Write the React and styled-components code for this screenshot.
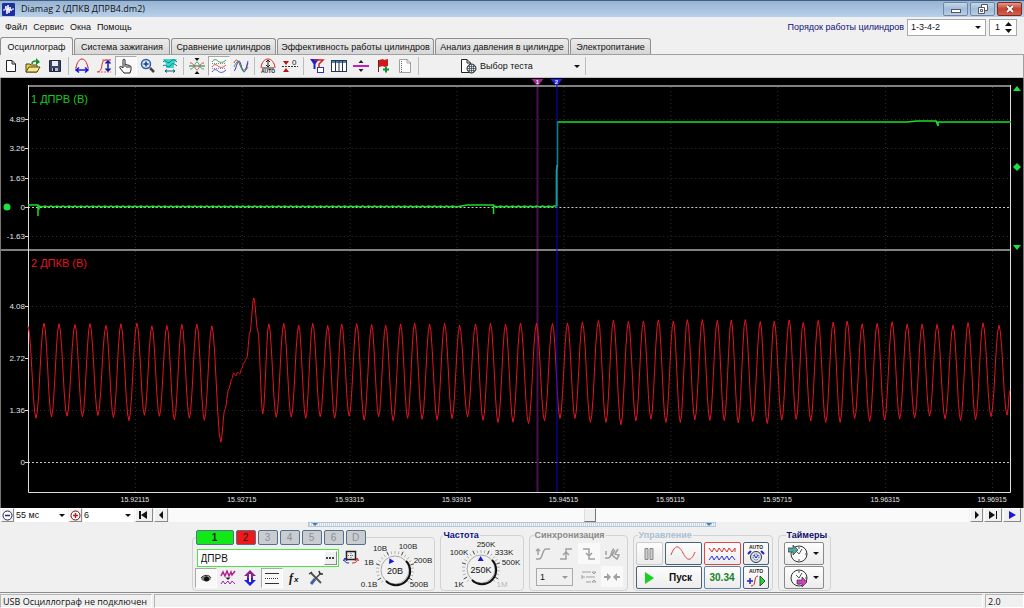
import React, { useState } from "react";
import styled, { createGlobalStyle, css } from "styled-components";

const GlobalStyle = createGlobalStyle`
  * { box-sizing: border-box; }
  body {
    margin: 0;
    background: #f0f0f0;
    font-family: "Liberation Sans", Arial, sans-serif;
    font-size: 10px;
    color: #111;
  }
  button, input, select { font: inherit; color: inherit; margin: 0; }
`;

/* ---------- signal data ---------- */

const PLOT_W = 984;
const PLOT_H = 408;
const FIRST_PEAKS = [0, 16, 31, 47, 62, 78, 93, 109, 124, 139, 154, 169, 184];
const NEXT_PEAKS = [
  241, 256, 271, 285, 300, 314, 329, 344, 358, 373, 387, 402, 417, 432, 448,
  463, 478, 493, 509, 525, 540, 555, 571, 586, 601, 616, 631, 646, 660, 675,
  690, 704, 718, 733, 747, 762, 776, 791, 806, 820, 835, 850, 865, 880, 895,
  910, 926, 941, 956, 972,
];
const GAP = [
  [193, 357], [197, 325], [201, 304], [204, 294], [206, 288], [208, 291],
  [210, 287], [212, 289], [214, 283], [216, 278], [219, 273], [222, 248],
  [226, 213], [230, 245], [235, 329],
];

const noise = (n) => {
  const v = Math.sin(n * 12.9898) * 43758.5453;
  return v - Math.floor(v);
};

const peakY = (x) => {
  const lift = Math.exp(-Math.pow((x - 680) / 170, 2)) * 4;
  return 241 - lift - noise(x) * 3;
};
const troughY = (x) => {
  const drop = Math.exp(-Math.pow((x - 620) / 200, 2)) * 4;
  return 330 + drop + noise(x + 3) * 6;
};

const withTroughs = (peaks) =>
  peaks.flatMap((x, i) => {
    const next = peaks[i + 1];
    const top = [x, peakY(x)];
    return next ? [top, [(x + next) / 2, troughY(x)]] : [top];
  });

const knots = [
  ...withTroughs(FIRST_PEAKS),
  ...GAP,
  ...withTroughs(NEXT_PEAKS),
  [980, 330],
  [983, 305],
];

const crankPath = knots
  .slice(1)
  .reduce((acc, [x1, y1], i) => {
    const [x0, y0] = knots[i];
    for (let s = 1; s <= 6; s += 1) {
      const t = s / 6;
      const ease = (1 - Math.cos(Math.PI * t)) / 2;
      acc.push(`L${(x0 + (x1 - x0) * t).toFixed(1)} ${(y0 + (y1 - y0) * ease).toFixed(1)}`);
    }
    return acc;
  }, [`M${knots[0][0]} ${knots[0][1]}`])
  .join("");

const camPath = (() => {
  const pts = ["M0 120H10V131V124H11V121"];
  for (let x = 14; x < 430; x += 3) pts.push(`L${x} ${x % 2 ? 121 : 122}`);
  pts.push("L440 120H466V129V121");
  for (let x = 470; x < 529; x += 3) pts.push(`L${x} ${x % 2 ? 121 : 122}`);
  pts.push("L529 121V85L530 80V37H880L890 36H909L911 41V37H984");
  return pts.join("");
})();

const TIMES = [
  [107, "15.92115"], [214, "15.92715"], [322, "15.93315"], [429, "15.93915"],
  [536, "15.94515"], [643, "15.95115"], [750, "15.95715"], [858, "15.96315"],
  [965, "15.96915"],
];
const LEVELS = [
  [34, "4.89"], [63, "3.26"], [93, "1.63"], [122, "0"], [151, "-1.63"],
  [221, "4.08"], [273, "2.72"], [325, "1.36"], [377, "0"],
];
const CURSORS = [
  { x: 510, label: "1", line: "#4a1050", flag: "#a02890" },
  { x: 529, label: "2", line: "#0a0ac8", flag: "#2020f0" },
];
const percent = (x) => `${(x / PLOT_W) * 100}%`;

/* ---------- layout ---------- */

const Window = styled.div`
  min-height: 100vh;
  display: flex;
  flex-direction: column;
  background: #f0f0f0;
`;

const TitleBar = styled.header`
  height: 17px;
  display: flex;
  align-items: center;
  gap: 6px;
  padding: 0 2px;
  border-top: 1px solid #3f5f86;
  background: linear-gradient(#98b4d2, #b7d0ea);
`;

const Title = styled.h1`
  flex: 1;
  margin: 0;
  font: 400 9px/14px "Open Sans", "Noto Sans", sans-serif;
`;

const WindowButtons = styled.div`
  display: flex;
  gap: 2px;
`;

const WindowButton = styled.button`
  width: 25px;
  height: 14px;
  padding: 0;
  display: grid;
  place-items: center;
  border: 1px solid ${(p) => (p.$close ? "#7c2b22" : "#71879f")};
  border-radius: 2px;
  background: ${(p) =>
    p.$close
      ? "linear-gradient(#e09a8c, #c8402c 50%, #d4604a)"
      : "linear-gradient(#c6d8ea, #a2bcd8 50%, #b8cfe6)"};
`;

const MenuRow = styled.div`
  height: 20px;
  display: flex;
  align-items: center;
  justify-content: space-between;
  padding: 0 7px 0 5px;
`;

const Menu = styled.nav`
  display: flex;
  gap: 6px;

  a {
    color: inherit;
    font-size: 9px;
    text-decoration: none;
  }
`;

const OrderBox = styled.div`
  display: flex;
  align-items: center;
  gap: 3px;

  label {
    color: #10107c;
    font-size: 9px;
  }
`;

const SelectWrap = styled.span`
  position: relative;
  display: inline-flex;
  width: ${(p) => p.$width}px;
  height: ${(p) => p.$height}px;

  select {
    width: 100%;
    padding: 0 0 0 ${(p) => (p.$flat ? 1 : 3)}px;
    appearance: none;
    border: ${(p) => (p.$flat ? "0" : "1px solid #a9a9a9")};
    border-radius: 0;
    background: ${(p) => p.$bg || "#fff"};
    font-size: 9px;
  }

  svg {
    position: absolute;
    right: ${(p) => (p.$flat ? 3 : 5)}px;
    top: 50%;
    margin-top: -1px;
    pointer-events: none;
  }
`;

const Spinner = styled.span`
  display: inline-flex;
  align-items: center;
  width: 28px;
  height: 17px;
  padding-right: 4px;
  border: 1px solid #a9a9a9;
  background: #fff;

  input {
    flex: 1;
    min-width: 0;
    width: 14px;
    padding: 0 0 0 5px;
    border: 0;
    background: none;
    appearance: textfield;
    font-size: 9px;
  }
  input::-webkit-inner-spin-button { appearance: none; display: none; }
`;

const Tabs = styled.div`
  height: 18px;
  display: flex;
  align-items: flex-end;
  gap: 1px;
  border-bottom: 1px solid #a0a0a0;
`;

const Tab = styled.button`
  width: ${(p) => p.$width}px;
  height: 16px;
  padding: 0;
  border: 1px solid #8f8f8f;
  border-bottom: 0;
  border-radius: 3px 3px 0 0;
  background: linear-gradient(#ececec, #d6d6d6);
  font-size: 9px;
  white-space: nowrap;
  ${(p) =>
    p.$active &&
    css`
      height: 18px;
      margin-bottom: -1px;
      background: #f2f2f2;
    `}
`;

const Toolbar = styled.div`
  height: 23px;
  display: flex;
  align-items: center;
  border-right: 1px solid #a0a0a0;
  border-bottom: 1px solid #c4c4c4;
`;

const ToolButton = styled.button`
  width: 22px;
  height: 20px;
  padding: 0;
  display: grid;
  place-items: center;
  border: 1px solid transparent;
  background: none;
  ${(p) =>
    p.$on &&
    css`
      border-color: #a8a8a8 #fff #fff #a8a8a8;
      background: #f9f9f9;
    `}
`;

const Separator = styled.span`
  width: 1px;
  height: 18px;
  margin: 0 2px;
  background: #bdbdbd;
`;

const TestButton = styled.button`
  width: 124px;
  height: 20px;
  margin-left: 38px;
  padding: 0 3px 0 1px;
  display: flex;
  align-items: center;
  gap: 3px;
  border: 0;
  background: none;
  font-size: 9px;

  span { flex: 1; text-align: left; }
`;

const Scope = styled.main`
  display: grid;
  grid-template-columns: 27px 1fr 12px;
  grid-template-rows: 7px 408px 15px;
  border-left: 1px solid #777;
  border-right: 1px solid #777;
  background: #000;

  svg { display: block; overflow: visible; }
  text { font-size: 8px; fill: #e4e4e4; }
`;

const TimeAxis = styled.svg`
  && text { font-size: 7px; }
`;

const Plot = styled.div`
  position: relative;
  min-width: 0;
`;

const ChannelTitle = styled.div`
  position: absolute;
  left: 3px;
  top: ${(p) => p.$top}px;
  color: ${(p) => p.$color};
  font-size: 11px;
  line-height: 12px;
`;

const TimeBar = styled.div`
  height: 14px;
  display: flex;
  align-items: stretch;
  gap: 1px;
  padding: 0 3px 0 1px;
`;

const SmallButton = styled.button`
  width: ${(p) => p.$width || 13}px;
  padding: 0;
  display: grid;
  place-items: center;
  border: 1px solid;
  border-color: #fff #8a8a8a #8a8a8a #fff;
  background: #f0f0f0;
`;

const Track = styled.div`
  flex: 1;
  display: grid;
  grid-template-columns: 417fr 12px 375fr;
  background: #fafafa;
`;

const Thumb = styled.div`
  grid-column: 2;
  border: 1px solid;
  border-color: #fff #777 #777 #ddd;
  background: #f0f0f0;
`;

const Splitter = styled.div`
  width: 408px;
  height: 5px;
  margin: 0 auto;
  display: flex;
  justify-content: space-between;
  align-items: center;
  padding: 0 3px;
  border: 1px solid #b4c6d8;
  background: repeating-linear-gradient(90deg, #ccd6e0 0 1px, #f2f6fa 1px 2px);
`;

const Panels = styled.section`
  display: flex;
  flex-wrap: wrap;
  justify-content: center;
  gap: 5px;
  padding: 3px 2px 1px 0;
`;

const Panel = styled.fieldset`
  min-width: 0;
  height: 61px;
  margin: 0;
  padding: ${(p) => p.$pad || "2px 2px 0"};
  width: ${(p) => p.$width}px;
  border: 1px solid #d2d2d2;
  border-radius: 4px;
`;

const Legend = styled.legend`
  margin-left: 2px;
  padding: 0 1px;
  color: ${(p) => p.$color};
  font-size: 9px;
  font-weight: 700;
  line-height: 10px;
`;

const ChannelButtons = styled.legend`
  display: flex;
  gap: 2px;
  padding: 0;
  margin-left: 1px;
`;

const ChannelButton = styled.button`
  width: ${(p) => (p.$wide ? 38 : 20)}px;
  height: 15px;
  padding: 0;
  border: 1px solid #55708c;
  border-radius: 2px;
  background: ${(p) => p.$bg || "#c9ccd0"};
  color: ${(p) => (p.$bg ? "#222" : "#8c9096")};
  font-weight: ${(p) => (p.$wide ? 700 : 400)};
  line-height: 12px;
`;

const ChannelBody = styled.div`
  display: flex;
  height: 45px;
  justify-content: space-between;
`;

const ChannelTools = styled.div`
  display: flex;
  flex-direction: column;
  gap: 1px;
  padding-top: 4px;
`;

const Row = styled.div`
  display: flex;
  align-items: center;
  gap: ${(p) => p.$gap || 0}px;
`;

const SyncSource = styled.div`
  grid-column: span 2;
  display: flex;
`;

const NameField = styled.div`
  display: flex;
  width: 142px;
  height: 18px;
  margin-left: 2px;
  padding: 1px;
  border: 1px solid #45e845;
  background: #fff;

  input {
    flex: 1;
    min-width: 0;
    padding: 0 2px;
    border: 0;
  }
`;

const KnobSvg = styled.svg`
  display: block;
  overflow: visible;
  font-size: 8px;
`;

const ButtonGrid = styled.div`
  display: grid;
  grid-template-columns: ${(p) => p.$cols};
  grid-auto-rows: 23px;
  gap: 1px 2px;
`;

const PushButton = styled.button`
  min-width: 0;
  padding: 0;
  display: flex;
  align-items: center;
  justify-content: center;
  gap: ${(p) => p.$gap || 0}px;
  grid-column: span ${(p) => p.$span || 1};
  border: 1px solid ${(p) => p.$border || "#48627c"};
  border-radius: 2px;
  background: linear-gradient(#fdfdfd, #ececec);
  color: ${(p) => p.$color || "#111"};
  font-size: 10px;
  font-weight: 700;
`;

const SyncGrid = styled.div`
  display: grid;
  grid-template-columns: repeat(4, 23px);
  grid-auto-rows: 23px;
  place-items: center;
`;

const SyncButton = styled.button`
  width: 22px;
  height: 21px;
  padding: 0;
  display: grid;
  place-items: center;
  border: 0;
  background: ${(p) => (p.$on ? "#f9f9f9" : "none")};
`;

const StatusBar = styled.footer`
  height: 16px;
  display: flex;
  gap: 2px;
  margin-top: auto;
  padding-top: 1px;
  border-top: 1px solid #8c8c8c;
  font: 400 9px/13px "Open Sans", "Noto Sans", sans-serif;
`;

const StatusCell = styled.div`
  flex: ${(p) => (p.$width ? `0 0 ${p.$width}px` : "1")};
  padding: 0 2px;
  border: 1px solid;
  border-color: #b5b5b5 #fff #fff #b5b5b5;
  white-space: nowrap;
`;

/* ---------- icons ---------- */

const Icon = ({ children, w = 16, h = 16 }) => (
  <svg width={w} height={h} viewBox={`0 0 ${w} ${h}`} fill="none" aria-hidden="true">
    {children}
  </svg>
);

const Caret = ({ color = "#111" }) => (
  <svg width="6" height="3" viewBox="0 0 6 3" aria-hidden="true">
    <path d="M0 0H6L3 3Z" fill={color} />
  </svg>
);

const AppIcon = () => (
  <Icon w={13} h={13}>
    <rect width="13" height="13" rx="1" fill="#1c2f9c" />
    <path d="M1 7H3L4 3L5 11L6 2L7 10L8 4L9 8L10 6H12" stroke="#fff" />
  </Icon>
);

const NewIcon = () => (
  <Icon>
    <path d="M3.500 2.500H9L12.500 6V13.500H3.500Z" fill="#fff" stroke="#222" />
    <path d="M9 2.500V6H12.500" stroke="#222" />
  </Icon>
);
const OpenIcon = () => (
  <Icon>
    <path d="M1 6H5L6 7H12V14H1Z" fill="#e2cd58" stroke="#55490e" />
    <path d="M1 14L4 9H15L12 14Z" fill="#f6e68c" stroke="#55490e" />
    <path d="M7 6C7 3 9 3 11 3" stroke="#1c8c2c" strokeWidth="1.500" />
    <path d="M11 0L15 4L11 7Z" fill="#1c8c2c" />
  </Icon>
);
const SaveIcon = () => (
  <Icon>
    <path d="M2.500 2.500H13.500V13.500H2.500Z" fill="#3c4468" stroke="#22263c" />
    <path d="M5 3H11V8H5Z" fill="#e8ecf4" />
    <path d="M5 10H11V13H5Z" fill="#b8bccc" />
    <path d="M6 10H8V13H6Z" fill="#22263c" />
  </Icon>
);
const WidthIcon = () => (
  <Icon>
    <path d="M1 10H2C4 -2 12 -2 14 10H15" stroke="#e02020" />
    <path d="M3 12H13M5 9.500L2 12L5 14.500M11 9.500L14 12L11 14.500" stroke="#1818d0" strokeWidth="1.500" />
  </Icon>
);
const HeightIcon = () => (
  <Icon>
    <path d="M1 14C8 14 4 3 9 2H15" stroke="#e02020" />
    <path d="M2 14H15M6 2H12" stroke="#e06060" strokeDasharray="2 1" />
    <path d="M12 3V13M9.500 5.500L12 3L14.500 5.500M9.500 10.500L12 13L14.500 10.500" stroke="#1818a0" strokeWidth="1.500" />
  </Icon>
);
const HandIcon = () => (
  <Icon>
    <path d="M5 9V2C5 1 7 1 7 2V7C7 6 9 6 9 7.500C9 6.500 11 6.500 11 8C11 7.500 13 7.500 13 9V12L12 15H6L2 10C1 8 3 8 5 10Z" fill="#fff" stroke="#222" />
    <path d="M7 7V9M9 8V10M11 8V10" stroke="#222" />
  </Icon>
);
const ZoomIcon = () => (
  <Icon>
    <circle cx="6" cy="6" r="4.500" fill="#d6e8fa" stroke="#2c5ca0" strokeWidth="1.500" />
    <path d="M3.500 6H8.500M6 3.500V8.500" stroke="#1c3c90" strokeWidth="1.500" />
    <path d="M10 10L14 14" stroke="#444" strokeWidth="2.500" />
  </Icon>
);
const SpanIcon = () => (
  <Icon>
    <path d="M1 1H15L12 6V10H4V6Z" fill="#38d8d0" />
    <path d="M1 4C4 0 5 7 8 4S12 1 15 4M1 8C4 5 6 11 8 8S12 5 15 8" stroke="#107878" />
    <path d="M3 13H13M5 11.500L3 13L5 14.500M11 11.500L13 13L11 14.500" stroke="#0c6078" />
  </Icon>
);
const CenterIcon = () => (
  <Icon>
    <path d="M0 8H16" stroke="#207040" />
    <path d="M1 5C5 4 6 12 8 12S11 4 15 5" stroke="#d84848" />
    <path d="M1 11C5 12 6 4 8 4S11 12 15 11" stroke="#40a060" />
    <path d="M5.500 0H10.500L8 3ZM5.500 16H10.500L8 13Z" fill="#111" />
  </Icon>
);
const StackIcon = () => (
  <Icon>
    <path d="M1 4C3 1 5 1 7 3S12 5 15 2" stroke="#30a050" />
    <path d="M1 9C3 6 5 6 7 8S12 10 15 7" stroke="#e04040" />
    <path d="M1 14C3 11 5 11 7 13S12 15 15 12" stroke="#4848e0" />
    <path d="M1 5.500H15M1 10.500H15" stroke="#888" strokeDasharray="1 1" />
  </Icon>
);
const OverlayIcon = () => (
  <Icon>
    <path d="M1 5C3 0 5 2 7 7S12 16 15 5" stroke="#e03030" />
    <path d="M1 13C3 12 4 3 6 3S9 14 11 14S14 6 15 3" stroke="#3030e0" />
    <path d="M1 9C4 2 6 2 8 9S13 13 15 9" stroke="#30a050" />
  </Icon>
);
const AutoIcon = () => (
  <Icon>
    <path d="M1 10C2 -2 14 -2 15 10" stroke="#e02020" />
    <path d="M8 2V9M6 4L8 2L10 4M6 7L8 9L10 7M2 10H14" stroke="#222" />
    <text x="8" y="15" fontSize="5" fontWeight="700" textAnchor="middle" fill="#222">AUTO</text>
  </Icon>
);
const ZeroIcon = () => (
  <Icon>
    <path d="M0 8.500H16" stroke="#333" strokeDasharray="2 1" />
    <path d="M1 3H7L4 7ZM1 14H7L4 10Z" fill="#b01818" />
    <text x="10" y="7" fontSize="8" fill="#222">0</text>
  </Icon>
);
const FilterIcon = () => (
  <Icon>
    <path d="M1 1H10L6.500 6V11H4.500V6Z" fill="#2020d0" />
    <path d="M5 2H14L10 6V10" stroke="#d02020" strokeWidth="1.500" />
    <rect x="8.500" y="9.500" width="6" height="5" fill="#fff" stroke="#3030c0" />
  </Icon>
);
const TableIcon = () => (
  <Icon>
    <rect x=".5" y="2.500" width="15" height="11" fill="#fff" stroke="#26364c" />
    <path d="M1 4H15" stroke="#5080b0" strokeWidth="2" />
    <path d="M4.500 3V13M8 3V13M11.500 3V13" stroke="#26364c" />
  </Icon>
);
const SplitIcon = () => (
  <Icon>
    <path d="M0 8H16" stroke="#c020c0" strokeWidth="2" />
    <path d="M5.500 5L8 2L10.500 5ZM5.500 11L8 14L10.500 11Z" fill="#222" />
  </Icon>
);
const FlagIcon = () => (
  <Icon>
    <path d="M3.500 2V14" stroke="#702020" />
    <path d="M4 2L8 1L9 2L13 1V8L9 9L8 8L4 9Z" fill="#d01818" />
    <path d="M11 8.500V14.500M8 11.500H14" stroke="#109030" strokeWidth="2" />
  </Icon>
);
const NoteIcon = () => (
  <Icon>
    <path d="M2.500 1.500H10L13.500 5V14.500H2.500Z" fill="#fafafa" stroke="#a0a0a0" />
    <path d="M4.500 3V14M10 1.500V5H13.500" stroke="#666" strokeDasharray="1 1" />
  </Icon>
);
const TestIcon = () => (
  <Icon w={17}>
    <path d="M1.500 1.500H7L10.500 5V14.500H1.500Z" fill="#fff" stroke="#222" />
    <path d="M7 1.500V5H10.500" stroke="#222" />
    <circle cx="11.500" cy="10.500" r="4.500" fill="#e8f0e8" stroke="#222" />
    <path d="M7 10.500H16M11.500 6V15M8 8.500H15M8 12.500H15M9.500 6.500V14.500M13.500 6.500V14.500" stroke="#345" strokeWidth=".7" />
  </Icon>
);
const RoundIcon = ({ plus }) => (
  <Icon w={11} h={11}>
    <circle cx="5.500" cy="5.500" r="4.500" fill="#fff" stroke={plus ? "#701010" : "#222850"} />
    <path
      d={plus ? "M3 5.500H8M5.500 3V8" : "M3 5.500H8"}
      stroke={plus ? "#c01818" : "#2020a0"}
      strokeWidth="1.500"
    />
  </Icon>
);
const Shape = ({ d, w = 10, h = 8, color = "#111" }) => (
  <Icon w={w} h={h}>
    <path d={d} fill={color} />
  </Icon>
);

const EyeIcon = () => (
  <Icon>
    <path d="M3 9C5 5 11 5 13 9C11 12 5 12 3 9Z" fill="#777" />
    <circle cx="8.500" cy="9" r="2.500" fill="#111" />
    <path d="M3 8C5 5 11 4 13 8" stroke="#222" />
  </Icon>
);
const CompressIcon = () => (
  <Icon>
    <path d="M1 6L3 2L5 6L7 1L9 6L11 2L12 5L15 1" stroke="#b02090" strokeWidth="1.500" />
    <path d="M1 14L3 11L5 14L8 11L10 14L12 11L15 14" stroke="#a020c0" />
    <path d="M5.500 7.500H10.500L8 10Z" fill="#222" />
  </Icon>
);
const UpDownIcon = () => (
  <Icon>
    <path d="M8 0L14 6H11V8H5V6H2Z" fill="#902090" />
    <path d="M8 16L14 10H11V8H5V10H2Z" fill="#2020e0" />
    <path d="M8 4V12" stroke="#fff" strokeWidth="2" />
  </Icon>
);
const LinesIcon = () => (
  <Icon>
    <path d="M1 3.500H15M1 13.500H15" stroke="#333" />
    <path d="M1 8.500H15" stroke="#333" strokeDasharray="1 1" />
  </Icon>
);
const FxIcon = () => (
  <Icon>
    <text x="3" y="12" fontSize="12" fontWeight="700" fontStyle="italic" fontFamily="Liberation Serif" fill="#111">f</text>
    <text x="8" y="12" fontSize="8" fontWeight="700" fontStyle="italic" fill="#111">x</text>
  </Icon>
);
const ToolsIcon = () => (
  <Icon>
    <path d="M3 3L13 13" stroke="#555" strokeWidth="2" />
    <path d="M13 3L7 9" stroke="#444" strokeWidth="1.500" />
    <path d="M7 9L3 14" stroke="#4060a0" strokeWidth="3" />
    <path d="M1 4L4 2M11 1L12 4L15 4" stroke="#333" strokeWidth="1.500" />
  </Icon>
);
const ScreenIcon = () => (
  <Icon>
    <rect x="3.500" y="1.500" width="9" height="8" fill="#eee" stroke="#222" strokeWidth="1.500" />
    <path d="M5 5.500H11M8 3V8" stroke="#666" strokeDasharray="1 1" />
    <path d="M6 13C3 13 1 12 2 9M0 11L2 8L4 11" stroke="#2020c0" />
    <path d="M9 13C12 13 15 12 14 9M12 11L14 8L16 11" stroke="#d02020" />
  </Icon>
);

const SYNC_ICONS = [
  "M1 13H4C8 13 7 3 11 3H15M3 3V9M1 5L3 3L5 5",
  "M2 13H8V3H14M5 9L8 6L11 9",
  "M2 3H8V13H14M5 7L8 10L11 7",
  "M1 12H4C8 12 7 3 10 3M2 5V9M11 4L8 9L13 13L15 9L11 8L14 3",
];

/* ---------- knobs ---------- */

const polar = (cx, cy, r, deg) => {
  const a = (deg * Math.PI) / 180;
  return [cx + r * Math.sin(a), cy - r * Math.cos(a)];
};

const Knob = ({ width, cx, cy, value, pointer, labels }) => {
  const ticks = Array.from({ length: 23 }, (_, i) => -132 + i * 12);
  const [px, py] = polar(cx, cy, 10, pointer);
  return (
    <KnobSvg width={width} height="45" role="img" aria-label={value}>
      {ticks.map((deg, i) => {
        const [x1, y1] = polar(cx, cy, 16, deg);
        const [x2, y2] = polar(cx, cy, i % 4 === 1 ? 20 : 19, deg);
        return (
          <line key={deg} x1={x1} y1={y1} x2={x2} y2={y2} stroke={i % 4 === 1 ? "#444" : "#b4b4b4"} />
        );
      })}
      <circle cx={cx} cy={cy} r="14" fill="#f2f2f2" stroke="#aaa" />
      <path
        d={`M${cx + 11} ${cy - 9}A14 14 0 0 1 ${cx - 9} ${cy + 11}`}
        fill="none"
        stroke="#111"
        strokeWidth="2"
      />
      <path
        d="M-3 2H3L0 -3Z"
        fill="#1818e0"
        transform={`translate(${px} ${py}) rotate(${pointer})`}
      />
      <text x={cx} y={cy + 4} textAnchor="middle" fontSize="9" fill="#111">{value}</text>
      {labels.map(([x, y, text, off]) => (
        <text key={text} x={x} y={y} textAnchor="middle" fill={off ? "#b8b8b8" : "#222"}>{text}</text>
      ))}
    </KnobSvg>
  );
};

const RANGE_LABELS = [
  [19, 6, "10В"], [47, 4, "100В"], [8, 20, "1В"], [62, 18, "200В"],
  [8, 42, "0.1В"], [58, 42, "500В"],
];
const RATE_LABELS = [
  [18, 15, "100K"], [45, 7, "250K"], [63, 15, "333K"], [70, 25, "500K"],
  [18, 47, "1K"], [61, 47, "1M", true],
];

/* ---------- sections ---------- */

const TABS = [
  ["Осциллограф", 73], ["Система зажигания", 96], ["Сравнение цилиндров", 105],
  ["Эффективность работы цилиндров", 157], ["Анализ давления в цилиндре", 134],
  ["Электропитание", 81],
];

const TOOLS = [
  [["Новый", NewIcon], ["Открыть", OpenIcon], ["Сохранить", SaveIcon]],
  [
    ["Ширина", WidthIcon], ["Высота", HeightIcon], ["Рука", HandIcon, true],
    ["Лупа", ZoomIcon], ["Диапазон", SpanIcon],
  ],
  [["Центр", CenterIcon], ["Раздельно", StackIcon, true], ["Вместе", OverlayIcon]],
  [["Авто", AutoIcon], ["Ноль", ZeroIcon]],
  [
    ["Фильтр", FilterIcon], ["Таблица", TableIcon], ["Линейка", SplitIcon],
    ["Метка", FlagIcon], ["Заметка", NoteIcon],
  ],
];

const MainToolbar = () => (
  <Toolbar>
    {TOOLS.map((group, i) => (
      <React.Fragment key={i}>
        {group.map(([label, Glyph, on]) => (
          <ToolButton key={label} aria-label={label} $on={on}>
            <Glyph />
          </ToolButton>
        ))}
        <Separator />
      </React.Fragment>
    ))}
    <TestButton>
      <TestIcon />
      <span>Выбор теста</span>
      <Caret />
    </TestButton>
    <Separator />
  </Toolbar>
);

const Oscilloscope = () => (
  <Scope>
    <span />
    <svg width="100%" height="7">
      {CURSORS.map((c) => (
        <svg key={c.label} x={percent(c.x)} overflow="visible">
          <path d="M-6 1H6L1 7H-1Z" fill={c.flag} />
          <text x="0" y="6" textAnchor="middle" style={{ fontSize: 6, fontWeight: 700 }}>{c.label}</text>
        </svg>
      ))}
    </svg>
    <span />

    <svg width="27" height={PLOT_H}>
      {LEVELS.map(([y, text]) => (
        <g key={y}>
          <text x="24" y={y + 3} textAnchor="end">{text}</text>
          <path d={`M24 ${y + 0.5}H27`} stroke="#ddd" />
        </g>
      ))}
      <circle cx="6" cy="122" r="3.500" fill="#20e040" />
      <path d="M0 165H27" stroke="#808080" strokeWidth="2" />
    </svg>
    <Plot>
      <svg
        width="100%"
        height={PLOT_H}
        viewBox={`0 0 ${PLOT_W} ${PLOT_H}`}
        preserveAspectRatio="none"
        fill="none"
      >
        {TIMES.map(([x]) => (
          <path key={x} d={`M${x + 0.5} 2V407`} stroke="#303030" strokeDasharray="1 3" />
        ))}
        {LEVELS.map(([y, text]) => (
          <path
            key={y}
            d={`M0 ${y + 0.5}H984`}
            stroke={text === "0" ? "#c8c8c8" : "#303030"}
            strokeDasharray={text === "0" ? "2 2" : "1 3"}
          />
        ))}
        <path d={`M${CURSORS[0].x} 0V407`} stroke={CURSORS[0].line} strokeWidth="2" />
        <path d="M0 1H984M0 165H984" stroke="#808080" strokeWidth="2" />
        <path d="M0.500 0V407.500H983.500V0" stroke="#e0e0e0" />
        <path d={camPath} stroke="#18e028" strokeWidth="1.500" />
        <path d={crankPath} stroke="#e81422" />
        <path d={`M${CURSORS[1].x + 0.5} 0V407`} stroke={CURSORS[1].line} />
        <path d="M529.500 80V121" stroke="#20c0c0" />
      </svg>
      <ChannelTitle $top={8} $color="#18c828">1 ДПРВ (В)</ChannelTitle>
      <ChannelTitle $top={172} $color="#e01420">2 ДПКВ (В)</ChannelTitle>
    </Plot>
    <svg width="12" height={PLOT_H}>
      <path d="M2 6H10L6 1ZM2 160H10L6 165ZM6 78L10 82L6 86L2 82Z" fill="#20e040" />
    </svg>

    <span />
    <TimeAxis width="100%" height="15">
      {TIMES.map(([x, text]) => (
        <text key={text} x={percent(x)} y="9" textAnchor="middle">{text}</text>
      ))}
    </TimeAxis>
  </Scope>
);

const ChannelPanel = ({ name, setName }) => (
  <Panel $width={243} $pad="0 1px 0 2px">
    <ChannelButtons>
      <ChannelButton $wide $bg="#10e818">1</ChannelButton>
      <ChannelButton $bg="#f01818">2</ChannelButton>
      {["3", "4", "5", "6", "D"].map((n) => (
        <ChannelButton key={n}>{n}</ChannelButton>
      ))}
    </ChannelButtons>
    <ChannelBody>
      <ChannelTools>
        <Row $gap={4}>
          <NameField>
            <input aria-label="Канал" value={name} onChange={(e) => setName(e.target.value)} />
            <SmallButton aria-label="Выбрать">
              <Shape w={8} h={2} d="M0 0H2V2H0ZM3 0H5V2H3ZM6 0H8V2H6Z" color="#444" />
            </SmallButton>
          </NameField>
          <ScreenIcon />
        </Row>
        <Row>
          <ToolButton $on aria-label="Показать"><EyeIcon /></ToolButton>
          <ToolButton aria-label="Сжать"><CompressIcon /></ToolButton>
          <ToolButton aria-label="Сдвиг"><UpDownIcon /></ToolButton>
          <ToolButton $on aria-label="Линии"><LinesIcon /></ToolButton>
          <ToolButton aria-label="Функция"><FxIcon /></ToolButton>
          <ToolButton aria-label="Настройка"><ToolsIcon /></ToolButton>
        </Row>
      </ChannelTools>
      <Knob width={72} cx={34} cy={25} value="20В" pointer={-25} labels={RANGE_LABELS} />
    </ChannelBody>
  </Panel>
);

const ClockIcon = ({ color, low }) => (
  <Icon w={20} h={20}>
    <circle cx="11" cy="10" r="8" fill="#fafafa" stroke="#333" />
    <path d="M11 3V5M17 10H19M11 15V17M11 10L14 5M11 10L8 7" stroke="#555" />
    <path
      d="M0 4H5V1L10 6L5 11V8H0Z"
      fill={color}
      stroke="#333"
      strokeWidth=".7"
      transform={low ? "translate(9 8)" : undefined}
    />
  </Icon>
);

const ControlPanels = () => {
  const [name, setName] = useState("ДПРВ");

  return (
    <Panels>
      <ChannelPanel name={name} setName={setName} />

      <Panel $width={84} $pad="0">
        <Legend $color="#10108c">Частота</Legend>
        <Knob width={82} cx={40} cy={29} value="250K" pointer={-2} labels={RATE_LABELS} />
      </Panel>

      <Panel $width={99}>
        <Legend $color="#8a8a8a">Синхронизация</Legend>
        <SyncGrid>
          {SYNC_ICONS.map((d, i) => (
            <SyncButton key={d} $on={i === 2} aria-label={`Режим ${i + 1}`}>
              <Icon><path d={d} stroke="#a0a0a0" strokeWidth="1.500" /></Icon>
            </SyncButton>
          ))}
          <SyncSource>
            <SelectWrap $width={37} $height={18} $bg="#f0f0f0">
              <select aria-label="Канал синхронизации"><option>1</option></select>
              <Caret color="#999" />
            </SelectWrap>
          </SyncSource>
          <SyncButton aria-label="Уровень">
            <Icon><path d="M1 3H10M5 8H14M5 13H10M1 6V10M1 8H4M11 3H15L13 5ZM11 13H15L13 11Z" stroke="#a0a0a0" /></Icon>
          </SyncButton>
          <SyncButton $on aria-label="Сблизить">
            <Icon><path d="M0 7H3V4L7 8L3 12V9H0ZM16 7H13V4L9 8L13 12V9H16Z" fill="#a0a0a0" /></Icon>
          </SyncButton>
        </SyncGrid>
      </Panel>

      <Panel $width={140}>
        <Legend $color="#a9bfd4">Управление</Legend>
        <ButtonGrid $cols="27px 37px 37px 26px">
          <PushButton $border="#ccc" aria-label="Пауза">
            <Icon w={10} h={12}><path d="M1 .5H4V11.500H1ZM6 .5H9V11.500H6Z" fill="#ccc" stroke="#888" /></Icon>
          </PushButton>
          <PushButton aria-label="Синус">
            <Icon w={26}><path d="M1 9C5 -2 9 -1 13 7S21 16 25 6" stroke="#d84040" /></Icon>
          </PushButton>
          <PushButton $border="#e04848" aria-label="Сигналы">
            <Icon w={28}>
              <path d="M1 2L4 6L6 2L9 6L11 2L14 6L16 2L19 6L21 2L24 6L27 2V6" stroke="#d83030" />
              <path d="M1 14L4 10L6 14L9 10L11 14L14 10L16 14L19 10L21 14L24 10L27 14" stroke="#3030d0" />
            </Icon>
          </PushButton>
          <PushButton aria-label="Авто настройка">
            <Icon w={20} h={20}>
              <text x="10" y="5" fontSize="5" fontWeight="700" textAnchor="middle" fill="#222">AUTO</text>
              <circle cx="10" cy="13" r="5.500" fill="#dce6f2" stroke="#334" />
              <circle cx="10" cy="13" r="3" stroke="#446" strokeDasharray="1 1" />
              <path d="M8 11L10 14L12 11" stroke="#2020d0" />
              <path d="M2 10L5 7M18 10L15 7" stroke="#2020d0" strokeWidth="2" />
            </Icon>
          </PushButton>
          <PushButton $span={2} $gap={15}>
            <Shape w={9} h={12} d="M0 0L9 6L0 12Z" color="#18d020" />
            Пуск
          </PushButton>
          <PushButton $color="#18802c" $border="#5c84b0">30.34</PushButton>
          <PushButton aria-label="Авто пуск">
            <Icon w={20} h={20}>
              <text x="10" y="5" fontSize="5" fontWeight="700" textAnchor="middle" fill="#222">AUTO</text>
              <path d="M1 13H7M4 10V16" stroke="#2020d0" strokeWidth="1.500" />
              <path d="M5 18C11 18 7 8 12 8" stroke="#c02020" />
              <path d="M14 8L19 13L14 18Z" fill="#30d040" stroke="#186020" />
            </Icon>
          </PushButton>
        </ButtonGrid>
      </Panel>

      <Panel $width={53} $pad="2px 5px 0">
        <Legend $color="#10106c">Таймеры</Legend>
        <ButtonGrid $cols="40px">
          <PushButton $gap={5} $border="#8a8a8a" aria-label="Таймер пуска">
            <ClockIcon color="#50a8a0" /><Caret />
          </PushButton>
          <PushButton $gap={5} $border="#8a8a8a" aria-label="Таймер остановки">
            <ClockIcon color="#d040c0" low /><Caret />
          </PushButton>
        </ButtonGrid>
      </Panel>
    </Panels>
  );
};

const App = () => {
  const [tab, setTab] = useState(0);
  const [cylinder, setCylinder] = useState(1);

  return (
    <Window>
      <GlobalStyle />
      <TitleBar>
        <AppIcon />
        <Title>Diamag 2 (ДПКВ ДПРВ4.dm2)</Title>
        <WindowButtons>
          <WindowButton aria-label="Свернуть">
            <Icon w={12} h={8}><rect x="1.500" y="4.500" width="9" height="3" fill="#fff" stroke="#556" /></Icon>
          </WindowButton>
          <WindowButton aria-label="Развернуть">
            <Icon w={12} h={10}>
              <path d="M4.500 .5H10.500V6.500H4.500Z" fill="#fff" stroke="#556" />
              <path d="M1.500 3.500H7.500V9.500H1.500ZM3.500 5.500H5.500V7.500H3.500Z" fill="#fff" stroke="#556" />
            </Icon>
          </WindowButton>
          <WindowButton $close aria-label="Закрыть">
            <Icon w={12} h={8}>
              <path d="M3 1L9 7M9 1L3 7" stroke="#633" strokeWidth="3.500" />
              <path d="M3 1L9 7M9 1L3 7" stroke="#fff" strokeWidth="2" />
            </Icon>
          </WindowButton>
        </WindowButtons>
      </TitleBar>

      <MenuRow>
        <Menu>
          {["Файл", "Сервис", "Окна", "Помощь"].map((item) => (
            <a href="#menu" key={item}>{item}</a>
          ))}
        </Menu>
        <OrderBox>
          <label htmlFor="order">Порядок работы цилиндров</label>
          <SelectWrap $width={79} $height={17}>
            <select id="order"><option>1-3-4-2</option></select>
            <Caret />
          </SelectWrap>
          <Spinner>
            <input
              type="number"
              aria-label="Цилиндр"
              value={cylinder}
              onChange={(e) => setCylinder(e.target.value)}
            />
            <Shape w={7} h={11} d="M0 4H7L3.500 0ZM0 7H7L3.500 11Z" />
          </Spinner>
        </OrderBox>
      </MenuRow>

      <Tabs role="tablist">
        {TABS.map(([label, width], i) => (
          <Tab
            key={label}
            role="tab"
            aria-selected={tab === i}
            $active={tab === i}
            $width={width}
            onClick={() => setTab(i)}
          >
            {label}
          </Tab>
        ))}
      </Tabs>
      <MainToolbar />

      <Oscilloscope />

      <TimeBar>
        <SmallButton aria-label="Сжать время"><RoundIcon /></SmallButton>
        <SelectWrap $flat $width={53} $height={14}>
          <select aria-label="Развертка"><option>55 мс</option></select>
          <Caret />
        </SelectWrap>
        <SmallButton aria-label="Растянуть время"><RoundIcon plus /></SmallButton>
        <SelectWrap $flat $width={51} $height={14}>
          <select aria-label="Масштаб"><option>6</option></select>
          <Caret />
        </SelectWrap>
        <SmallButton $width={18} aria-label="В начало"><Shape d="M0 0H2V8H0ZM2 4L8 0V8Z" /></SmallButton>
        <SmallButton $width={14} aria-label="Назад"><Shape w={4} d="M0 4L4 0V8Z" /></SmallButton>
        <Track><Thumb /></Track>
        <SmallButton aria-label="Вперед"><Shape w={4} d="M0 0L4 4L0 8Z" /></SmallButton>
        <SmallButton $width={18} aria-label="В конец"><Shape d="M1 0L7 4L1 8ZM8 0H9V8H8Z" /></SmallButton>
        <SmallButton $width={18} aria-label="Воспроизвести"><Shape w={7} d="M0 0L7 4L0 8Z" color="#1818e0" /></SmallButton>
      </TimeBar>

      <Splitter>
        <Caret color="#4080c0" />
        <Caret color="#4080c0" />
      </Splitter>

      <ControlPanels />

      <StatusBar>
        <StatusCell $width={152}>USB Осциллограф не подключен</StatusCell>
        <StatusCell />
        <StatusCell $width={39}>2.0</StatusCell>
      </StatusBar>
    </Window>
  );
};

export default App;
